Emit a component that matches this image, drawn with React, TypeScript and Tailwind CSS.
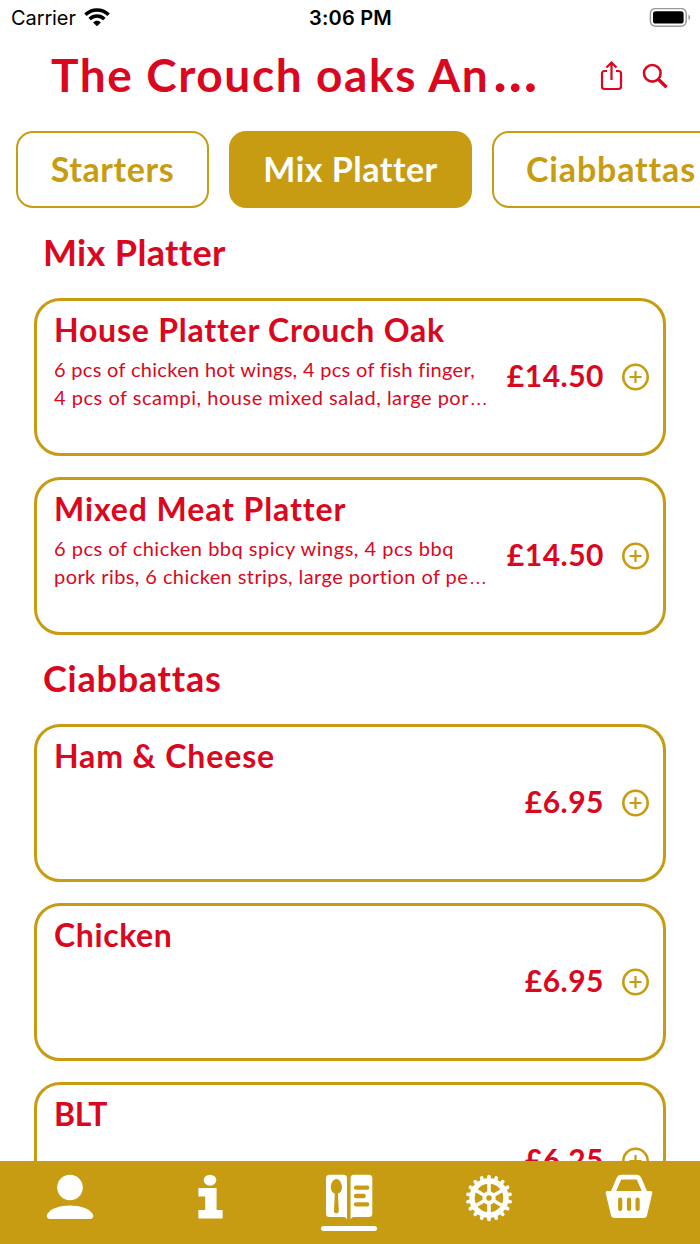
import React from 'react';

interface MenuItem {
  name: string;
  nameClass: string;
  description: { text: string; className: string; clipped?: boolean }[];
  price: string;
}

interface MenuSection {
  title: string;
  titleClass: string;
  items: MenuItem[];
}

const sections: MenuSection[] = [
  {
    title: 'Mix Platter',
    titleClass: 'tracking-[0.35px]',
    items: [
      {
        name: 'House Platter Crouch Oak',
        nameClass: 'tracking-[0.78px]',
        description: [
          { text: '6 pcs of chicken hot wings, 4 pcs of fish finger,', className: 'tracking-[0.31px]' },
          { text: '4 pcs of scampi, house mixed salad, large por', className: 'tracking-[0.52px]', clipped: true },
        ],
        price: '£14.50',
      },
      {
        name: 'Mixed Meat Platter',
        nameClass: 'tracking-[0.9px]',
        description: [
          { text: '6 pcs of chicken bbq spicy wings, 4 pcs bbq', className: 'tracking-[0.5px]' },
          { text: 'pork ribs, 6 chicken strips, large portion of pe', className: 'tracking-[0.42px]', clipped: true },
        ],
        price: '£14.50',
      },
    ],
  },
  {
    title: 'Ciabbattas',
    titleClass: 'tracking-[0.75px]',
    items: [
      { name: 'Ham & Cheese', nameClass: 'tracking-[0.88px]', description: [], price: '£6.95' },
      { name: 'Chicken', nameClass: 'tracking-[0.6px]', description: [], price: '£6.95' },
      { name: 'BLT', nameClass: 'tracking-[-0.3px]', description: [], price: '£6.25' },
    ],
  },
];

const StatusBar: React.FC = () => (
  <div className="flex h-9 shrink-0 items-center justify-between pl-[11px] pr-[10px] font-['Inter',sans-serif] text-[20px] leading-9 text-black">
    <div className="flex w-[200px] items-center gap-2">
      <span className="tracking-[-0.1px]">Carrier</span>
      <svg width="26" height="20" viewBox="0 0 26 20" fill="none" stroke="currentColor" strokeWidth="3.5">
        <path d="M1.400 6.800C8 .4 18 .4 24.600 6.800" />
        <path d="M5.600 11C9.900 7 16.100 7 20.400 11" />
        <path d="M13 18.200l-3.900-3.700c2.200-2.200 5.600-2.200 7.800 0z" fill="currentColor" stroke="none" />
      </svg>
    </div>
    <span className="font-semibold tracking-[0.2px]">3:06 PM</span>
    <div className="flex w-[200px] justify-end">
      <svg className="-mr-px" width="42" height="20" viewBox="0 0 42 20" fill="none">
        <rect x="1.4" y="0.600" width="35.8" height="17.6" rx="5" stroke="#9b9b9b" strokeWidth="1.5" />
        <rect x="4" y="3.200" width="30.6" height="12.4" rx="2.6" fill="#000" />
        <path d="M39.500 6.600c2.200 1 2.200 4.600 0 5.600z" fill="#9b9b9b" />
      </svg>
    </div>
  </div>
);

const Header: React.FC = () => (
  <header className="flex h-[74px] shrink-0 items-center pl-[51px] pr-8 text-[#d9081e]">
    <h1 className="flex-1 whitespace-nowrap pt-px text-[46px] font-bold leading-[60px] tracking-[1.6px]">
      The Crouch oaks An<span className="ml-[4px] text-[57px] leading-none">…</span>
    </h1>
    <svg className="mt-[5px] mr-[19px]" width="24" height="32" viewBox="0 0 24 32" fill="none" stroke="currentColor" strokeWidth="2.200">
      <path d="M8 11H5.500a2.500 2.500 0 0 0-2.500 2.500v13a2.500 2.500 0 0 0 2.500 2.500h14a2.500 2.500 0 0 0 2.500-2.500v-13a2.500 2.500 0 0 0-2.500-2.500H17" />
      <path d="M12.500 20V2.500M7.500 7.500l5-5 5 5" />
    </svg>
    <svg className="mt-[5px]" width="26" height="26" viewBox="0 0 26 26" fill="none" stroke="currentColor">
      <circle cx="10.300" cy="10.300" r="8.300" strokeWidth="2.600" />
      <path d="M16 16l8.600 8.200" strokeWidth="3.400" />
    </svg>
  </header>
);

const CategoryTabs: React.FC = () => (
  <nav className="flex h-[99px] shrink-0 gap-5 overflow-hidden pl-4 pt-[21px] text-[34px] font-bold">
    <button className="flex h-[77px] w-[193px] shrink-0 items-center justify-center rounded-[17px] border-2 border-[#c79c12] pb-[2px] text-[#c79c12]">
      <span className="tracking-[0.6px]">Starters</span>
    </button>
    <button className="flex h-[77px] w-[243px] shrink-0 items-center justify-center rounded-[17px] bg-[#c79c12] pb-[2px] text-white">
      <span className="tracking-[0.5px]">Mix Platter</span>
    </button>
    <button className="flex h-[77px] w-[238px] shrink-0 items-center justify-center rounded-[17px] border-2 border-[#c79c12] pb-[2px] text-[#c79c12]">
      <span className="tracking-[0.85px]">Ciabbattas</span>
    </button>
  </nav>
);

const MenuCard: React.FC<{ item: MenuItem }> = ({ item }) => (
  <article className="flex h-[158px] shrink-0 rounded-[26px] border-[3px] border-[#c79c12] pl-[17px] pr-[14px]">
    <div className="flex-1 pt-2">
      <h3 className="whitespace-nowrap text-[32px] font-bold leading-[42px]">
        <span className={item.nameClass}>{item.name}</span>
      </h3>
      <div className="pt-[5px] text-[20px] leading-[27.5px]">
        {item.description.map((line) => (
          <p key={line.text} className="h-[27.5px] w-0 whitespace-nowrap">
            <span className={line.className}>{line.text}</span>
            {line.clipped && <span className="ml-px text-[24px] font-light leading-none">…</span>}
          </p>
        ))}
      </div>
    </div>
    <div className="flex items-center gap-[17px]">
      <span className="pb-1 text-[30px] font-bold tracking-[0.5px]">{item.price}</span>
      <svg width="28" height="28" viewBox="0 0 28 28" fill="none" stroke="#c79c12" strokeWidth="2.600">
        <circle cx="14.500" cy="14" r="12.200" />
        <path d="M14.500 8v12M8.500 14h12" strokeWidth="2.200" />
      </svg>
    </div>
  </article>
);

const UserIcon = () => (
  <svg width="48" height="46" viewBox="0 0 48 46" fill="currentColor">
    <circle cx="24" cy="13.500" r="12.800" />
    <path d="M4 45C1 45 0 42.500 1.400 39.800C5 34.500 13.500 31.500 24 31.500S43 34.500 46.600 39.800C48 42.500 47 45 44 45Z" />
  </svg>
);

const InfoIcon = () => (
  <svg width="26" height="46" viewBox="0 0 26 46" fill="currentColor">
    <ellipse cx="13" cy="6.200" rx="6.300" ry="5.500" />
    <path d="M1.400 14h18.200v22h6v8.500H1.400V36h6.800V22.400H1.400z" />
  </svg>
);

const MenuIcon = () => (
  <svg width="48" height="48" viewBox="0 0 48 48">
    <path d="M4.500.8H19c1.700 0 3 1.300 3 3v41.700c-.8-1.700-1.600-2.500-3.600-2.500H4.500A3.500 3.500 0 0 1 1 39.500V4.300A3.500 3.500 0 0 1 4.500.8z" fill="#fff" />
    <path d="M28.500.8h15.300a3.500 3.500 0 0 1 3.500 3.500v35.200a3.500 3.500 0 0 1-3.500 3.500H29.200c-2 0-2.800.8-3.600 2.500V3.800c0-1.700 1.200-3 2.900-3z" fill="#fff" />
    <path d="M11.400 5c-3.200 0-5.600 4.300-5.600 8.500 0 3 1.600 5.300 4 6.300L9 37c-.1 1.400.9 2.300 2.400 2.300s2.500-.9 2.400-2.300L13 19.800c2.400-1 4-3.300 4-6.300C17 9.300 14.600 5 11.400 5z" fill="#c79c12" />
    <path d="M31 13.700h11.200M31 22h7.700M31 30.400h11.200" stroke="#c79c12" strokeWidth="4.300" strokeLinecap="round" />
  </svg>
);

const teeth = Array.from({ length: 18 }, (_, i) => i * 20);
const spokes = [0, 60, 120, 180, 240, 300];

const GearIcon = () => (
  <svg width="48" height="48" viewBox="0 0 48 48" fill="none" stroke="currentColor">
    <circle cx="24" cy="24" r="17" strokeWidth="5.400" />
    {teeth.map((angle) => (
      <path key={angle} d="M24 6V2.600" strokeWidth="3.700" strokeLinecap="round" transform={`rotate(${angle} 24 24)`} />
    ))}
    <circle cx="24" cy="24" r="4.700" strokeWidth="4" />
    {spokes.map((angle) => (
      <path key={angle} d="M24 19V8" strokeWidth="3.600" transform={`rotate(${angle} 24 24)`} />
    ))}
  </svg>
);

const BasketIcon = () => (
  <svg width="48" height="46" viewBox="0 0 48 46">
    <path d="M8 18.500L14 4.500c.4-.9 1-1.300 2-1.300h16c1 0 1.600.4 2 1.300l6 14" fill="none" stroke="#fff" strokeWidth="4.800" />
    <path d="M2.500 17h43c1.600 0 2.100 1.100 1.700 2.500L42 41.500c-.5 1.600-1.500 2.500-3.200 2.500H9.200c-1.700 0-2.700-.9-3.200-2.500L.8 19.500C.4 18.100.9 17 2.500 17z" fill="#fff" />
    <path d="M15.200 25.500v9.500M24 25.500v9.500M32.600 25.500v9.500" stroke="#c79c12" strokeWidth="4.200" strokeLinecap="round" />
  </svg>
);

const navIcons = [UserIcon, InfoIcon, MenuIcon, GearIcon, BasketIcon];

const BottomNav: React.FC = () => (
  <nav className="grid h-[83px] shrink-0 grid-cols-5 bg-[#c79c12] pr-px pt-[13px] text-white">
    {navIcons.map((Icon, index) => (
      <button key={index} className="flex flex-col items-center">
        <Icon />
        {index === 2 && <span className="mt-[4px] h-[5px] w-14 shrink-0 rounded-full bg-white" />}
      </button>
    ))}
  </nav>
);

const App: React.FC = () => {
  return (
    <div className="flex h-[1244px] w-[700px] flex-col overflow-hidden bg-white font-['Lato',sans-serif]">
      <StatusBar />
      <Header />
      <CategoryTabs />
      <main className="min-h-0 flex-1 overflow-hidden px-[34px] text-[#d9081e]">
        {sections.map((section) => (
          <section key={section.title}>
            <h2 className="flex h-[89px] items-center pb-1 pl-[9px] text-[36px] font-bold">
              <span className={section.titleClass}>{section.title}</span>
            </h2>
            <div className="flex flex-col gap-[21px]">
              {section.items.map((item) => (
                <MenuCard key={item.name} item={item} />
              ))}
            </div>
          </section>
        ))}
      </main>
      <BottomNav />
    </div>
  );
};

export default App;
